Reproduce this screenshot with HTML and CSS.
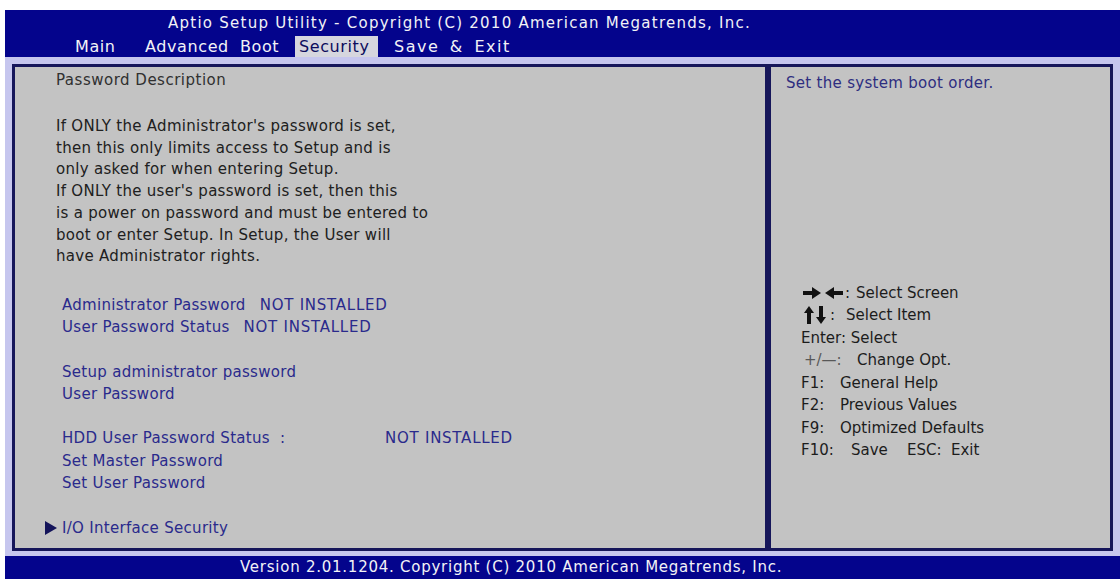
FILE: index.html
```html
<!DOCTYPE html>
<html>
<head>
<meta charset="utf-8">
<link rel="stylesheet" href="styles.css">
</head>
<body>
<div class="screen">
  <div class="topbar">
    <div class="title">Aptio Setup Utility - Copyright (C) 2010 American Megatrends, Inc.</div>
    <div class="menu">
      <span class="tab t-main">Main</span>
      <span class="tab t-adv">Advanced</span>
      <span class="tab t-boot">Boot</span>
      <span class="tab t-sec active">Security</span>
      <span class="tab t-save">Save &amp; Exit</span>
    </div>
  </div>
  <div class="main">
    <div class="panel left">
      <div class="ptitle">Password Description</div>
      <div class="desc">
        <div>If ONLY the Administrator's password is set,</div>
        <div>then this only limits access to Setup and is</div>
        <div>only asked for when entering Setup.</div>
        <div>If ONLY the user's password is set, then this</div>
        <div>is a power on password and must be entered to</div>
        <div>boot or enter Setup. In Setup, the User will</div>
        <div>have Administrator rights.</div>
      </div>
      <div class="items">
        <div class="item"><span class="lbl">Administrator Password</span><span class="val">NOT INSTALLED</span></div>
        <div class="item"><span class="lbl">User Password Status</span><span class="val">NOT INSTALLED</span></div>
        <div class="blank"></div>
        <div class="item">Setup administrator password</div>
        <div class="item">User Password</div>
        <div class="blank"></div>
        <div class="item hdd"><span class="hlbl">HDD User Password Status&nbsp;&nbsp;:</span><span class="val">NOT INSTALLED</span></div>
        <div class="item">Set Master Password</div>
        <div class="item">Set User Password</div>
        <div class="blank"></div>
        <div class="item sub"><svg class="tri" width="14" height="16" viewBox="0 0 14 16"><polygon points="1,1 13,8 1,15" fill="#14145a"/></svg><span>I/O Interface Security</span></div>
      </div>
    </div>
    <div class="panel right">
      <div class="help">Set the system boot order.</div>
      <div class="legend">
        <div class="lrow"><span class="key kw1"><svg class="arr" width="40" height="12" viewBox="0 0 40 12"><rect x="0" y="4" width="10" height="4" fill="#111"/><polygon points="9,0 18,6 9,12" fill="#111"/><polygon points="31,0 22,6 31,12" fill="#111"/><rect x="30" y="4" width="10" height="4" fill="#111"/></svg>:</span>Select Screen</div>
        <div class="lrow"><span class="key kw2"><svg class="arr2" width="24" height="18" viewBox="0 0 24 18"><polygon points="5,0 10,7 0,7" fill="#111"/><rect x="3" y="6" width="4" height="12" fill="#111"/><rect x="15" y="0" width="4" height="12" fill="#111"/><polygon points="17,18 22,11 12,11" fill="#111"/></svg>:</span>Select Item</div>
        <div class="lrow">Enter: Select</div>
        <div class="lrow"><span class="key kw3 light">+/—:</span>Change Opt.</div>
        <div class="lrow"><span class="key kw4">F1:</span>General Help</div>
        <div class="lrow"><span class="key kw4">F2:</span>Previous Values</div>
        <div class="lrow"><span class="key kw4">F9:</span>Optimized Defaults</div>
        <div class="lrow"><span class="key kw5">F10:</span><span class="key kw6">Save</span><span class="key kw7">ESC:</span>Exit</div>
      </div>
    </div>
  </div>
  <div class="footer">Version 2.01.1204. Copyright (C) 2010 American Megatrends, Inc.</div>
</div>
</body>
</html>
```
FILE: styles.css
```css
* { box-sizing: border-box; }
html, body { margin: 0; padding: 0; background: #ffffff; }
body {
  font-family: "DejaVu Sans", "Liberation Sans", sans-serif;
  font-size: 15px;
  color: #222;
}
.screen {
  margin: 10px 0 0 5px;
  width: 1115px;
  height: 569px;
  background: #c6c6ee;
  display: flex;
  flex-direction: column;
}
.topbar {
  height: 47px;
  background: #04048c;
  color: #f2f2f6;
  padding-top: 2px;
}
.title {
  height: 22px;
  line-height: 22px;
  padding-left: 163px;
  letter-spacing: 1.25px;
  white-space: nowrap;
}
.menu {
  margin-top: 2px;
  height: 21px;
  line-height: 21px;
  font-size: 16px;
  letter-spacing: 0.6px;
  padding-left: 70px;
  display: flex;
  white-space: nowrap;
}
.tab { display: block; }
.t-main { width: 70px; }
.t-adv { width: 95px; }
.t-boot { width: 55px; }
.t-sec { width: 83px; margin-right: 16px; }
.t-save { letter-spacing: 1.5px; word-spacing: 4px; }
.active {
  background: #d6d6de;
  color: #0c0c5c;
  padding-left: 4px;
}
.main {
  flex: 1;
  display: flex;
  padding: 7px 7px 5px 7px;
}
.panel {
  background: #c3c3c3;
  border: 3px solid #16165a;
}
.left {
  width: 756px;
  padding: 2px 0 0 41px;
}
.right {
  flex: 1;
  border-left-width: 3px;
  padding: 5px 0 0 15px;
}
.ptitle {
  line-height: 22px;
  color: #303030;
  letter-spacing: 0.5px;
}
.desc {
  margin-top: 25px;
  line-height: 21.7px;
  letter-spacing: 0.3px;
  color: #202020;
}
.items {
  margin-top: 25.7px;
  padding-left: 6px;
  color: #2a2a8c;
  letter-spacing: 0.3px;
}
.item {
  height: 22.3px;
  line-height: 22.3px;
  white-space: nowrap;
  display: flex;
}
.blank { height: 22.3px; }
.lbl { margin-right: 14px; }
.val { letter-spacing: 0.75px; }
.hlbl { width: 323px; }
.sub { margin-left: -18px; align-items: center; }
.tri { margin-right: 4px; }
.help {
  line-height: 22px;
  color: #2e2e80;
  letter-spacing: 0.3px;
}
.legend {
  margin-top: 187.6px;
  margin-left: 15px;
  line-height: 22.5px;
  color: #1c1c1c;
}
.lrow {
  height: 22.5px;
  display: flex;
  align-items: center;
  white-space: nowrap;
}
.key { display: flex; align-items: center; }
.kw1 { width: 55px; }
.kw2 { width: 45px; }
.kw3 { width: 56px; }
.kw4 { width: 39px; }
.kw5 { width: 50px; }
.kw6 { width: 56px; }
.kw7 { width: 44px; }
.arr { margin: 0 2px 0 2px; }
.arr2 { margin: 0 2px 0 3px; }
.light { color: #585858; padding-left: 3px; }
.footer {
  height: 23px;
  line-height: 23px;
  background: #04048c;
  color: #f2f2f6;
  padding-left: 235px;
  letter-spacing: 0.75px;
  white-space: nowrap;
}
```
